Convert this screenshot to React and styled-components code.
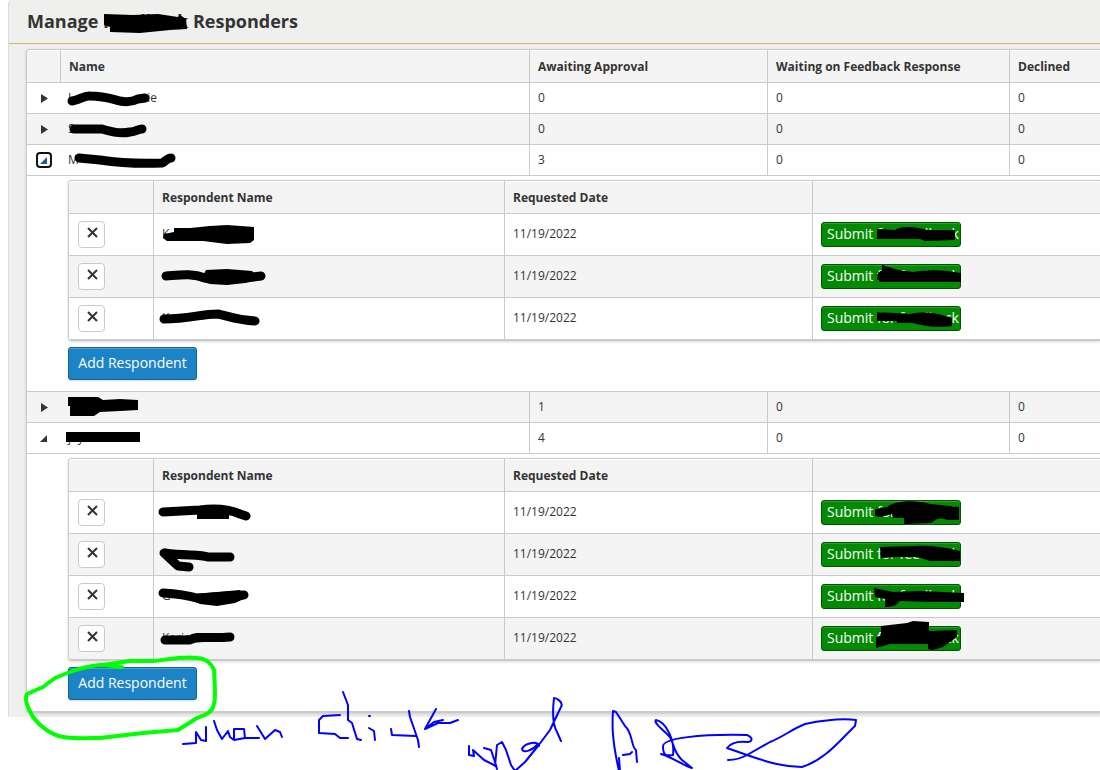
import React from 'react';
import styled, { createGlobalStyle } from 'styled-components';

const GlobalStyle = createGlobalStyle`
  * { box-sizing: border-box; }
  body {
    margin: 0;
    background: #fff;
    color: #333;
    font-family: "Open Sans", "Noto Sans", sans-serif;
    font-size: 12px;
    line-height: 16px;
  }
`;

const Page = styled.div`
  position: relative;
  min-height: 100vh;
  padding-left: 8px;
  overflow: hidden;
`;

const Panel = styled.main`
  border-left: 1px solid #dcdcdc;
  border-top-left-radius: 4px;
  background: #efefed;
  padding-bottom: 4px;
`;

const PanelHeader = styled.header`
  height: 44px;
  padding: 9px 18px;
  border-bottom: 1px solid #d5b95c;
`;

const Title = styled.h1`
  margin: 0;
  font-size: 18px;
  line-height: 24px;
  font-weight: 700;
`;

const PanelBody = styled.div`
  padding: 5px 0 0 17px;
`;

const Grid = styled.table`
  width: 100%;
  table-layout: fixed;
  border-collapse: separate;
  border-spacing: 0;
  border: solid #cacaca;
  border-width: 1px 0 1px 1px;
  border-radius: 4px 0 0 4px;
  background: #fff;
  box-shadow: 0 1px 3px rgba(0, 0, 0, 0.15);
`;

const Col = styled.col`
  width: ${(p) => p.$width || 'auto'};
`;

const HeadCell = styled.th`
  height: 33px;
  padding: 2px 8px 0;
  border-bottom: 1px solid #cacaca;
  background: #f4f4f4;
  box-shadow: inset 0 1px #fff;
  text-align: left;
  font-weight: 700;

  & + & { border-left: 1px solid #cacaca; }
  &:first-child { border-top-left-radius: 4px; }
`;

const Row = styled.tr`
  background: ${(p) => (p.$shaded ? '#f4f4f4' : '#fff')};
`;

const Cell = styled.td`
  height: ${(p) => (p.$tall ? '42px' : '31px')};
  padding: 0 8px;
  border-bottom: 1px solid #cacaca;
  border-left: ${(p) => (p.$divided ? '1px solid #cacaca' : '0')};
`;

const TextCell = styled(Cell)`
  padding-bottom: 2px;
`;

const ToggleCell = styled(Cell)`
  padding: 0 0 0 9px;
`;

const RemoveCell = styled(Cell)`
  padding: 0 9px;
`;

const DetailCell = styled.td`
  padding: 4px 0 11px 41px;
  border-bottom: 1px solid #cacaca;
`;

const PersonName = styled.span`
  display: flex;
  gap: ${(p) => p.$gap || 0}px;
`;

const Toggle = styled.button`
  display: flex;
  align-items: center;
  justify-content: center;
  width: 16px;
  height: 16px;
  padding: 0;
  border: 2px solid ${(p) => (p.$focused ? '#101010' : 'transparent')};
  border-radius: 4px;
  background: none;
  color: ${(p) => (p.$focused ? '#1f5a96' : '#333')};
`;

const RemoveButton = styled.button`
  display: flex;
  justify-content: center;
  width: 27px;
  height: 27px;
  padding: 5px 0 0 2px;
  border: 1px solid #cacaca;
  border-radius: 4px;
  background: #fff;
  color: #333;
`;

const SubmitButton = styled.button`
  display: block;
  height: 25px;
  width: 140px;
  padding: 0 5px 2px;
  border: 1px solid #045404;
  border-radius: 3px;
  background: #028a02;
  box-shadow: inset 0 1px #2fa02f;
  color: #fff;
  font: 14px/20px "Open Sans", "Noto Sans", sans-serif;
  text-align: left;
  white-space: nowrap;
`;

const AddButton = styled.button`
  display: block;
  width: 129px;
  height: 33px;
  margin-top: 6px;
  padding: 0 8px 2px;
  border: 1px solid #15618f;
  border-radius: 3px;
  background: #1c83c6;
  box-shadow: inset 0 1px #4a9fd4, 0 1px 2px rgba(0, 0, 0, 0.15);
  color: #fff;
  font: 14px/20px "Open Sans", "Noto Sans", sans-serif;
  white-space: nowrap;
`;

const Ink = styled.svg`
  position: absolute;
  top: 0;
  left: 0;
  pointer-events: none;
`;

function ToggleIcon({ open }) {
  return (
    <svg width="8" height="10" viewBox="0 0 8 10" fill="currentColor" aria-hidden="true">
      <path d={open ? 'M7 2v7H0z' : 'M1 1l7 4.5-7 4.5z'} />
    </svg>
  );
}

function CrossIcon() {
  return (
    <svg width="11" height="11" viewBox="0 0 11 11" fill="none" stroke="currentColor" strokeWidth="2" aria-hidden="true">
      <path d="M1 1l9 9M10 1L1 10" />
    </svg>
  );
}

const responders = [
  { id: 1, name: ['L', 'ie'], gap: 73, awaiting: 0 },
  { id: 2, name: ['S'], awaiting: 0 },
  { id: 3, name: ['M'], awaiting: 3, open: true, focused: true, people: ['K', '', 'K'] },
  { id: 4, name: [''], awaiting: 1 },
  { id: 5, name: ['jay'], awaiting: 4, open: true, people: ['', '', 'G', 'Karin'] },
];

function Respondents({ people }) {
  return (
    <>
      <Grid>
        <colgroup>
          <Col $width="84px" /><Col /><Col $width="308px" /><Col $width="288px" />
        </colgroup>
        <thead>
          <tr>
            <HeadCell aria-label="Remove" />
            <HeadCell>Respondent Name</HeadCell>
            <HeadCell>Requested Date</HeadCell>
            <HeadCell aria-label="Submit" />
          </tr>
        </thead>
        <tbody>
          {people.map((person, i) => (
            <Row key={i} $shaded={i % 2 === 1}>
              <RemoveCell $tall>
                <RemoveButton type="button" aria-label="Remove respondent"><CrossIcon /></RemoveButton>
              </RemoveCell>
              <TextCell $tall $divided>{person}</TextCell>
              <TextCell $tall $divided>11/19/2022</TextCell>
              <Cell $tall $divided>
                <SubmitButton type="button">Submit for feedback</SubmitButton>
              </Cell>
            </Row>
          ))}
        </tbody>
      </Grid>
      <AddButton type="button">Add Respondent</AddButton>
    </>
  );
}

function Responder({ item, shaded }) {
  return (
    <>
      <Row $shaded={shaded}>
        <ToggleCell>
          <Toggle type="button" $focused={item.focused} aria-expanded={!!item.open} aria-label="Show respondents">
            <ToggleIcon open={item.open} />
          </Toggle>
        </ToggleCell>
        <Cell>
          <PersonName $gap={item.gap}>
            {item.name.map((part) => <span key={part}>{part}</span>)}
          </PersonName>
        </Cell>
        <Cell $divided>{item.awaiting}</Cell>
        <Cell $divided>0</Cell>
        <Cell $divided>0</Cell>
      </Row>
      {item.open && (
        <tr>
          <DetailCell colSpan={5}><Respondents people={item.people} /></DetailCell>
        </tr>
      )}
    </>
  );
}

const blackShapes = [
  'M104 14L133 15 158 14 178 17 180 15 186 19 187 29 170 30 140 33 110 32 110 27 104 25Z',
  'M174 228L190 228 210 226 227 225 254 227 254 240 250 243 227 244 203 241 167 241 163 238 164 234 174 232Z',
  'M206 270L227 269 252 271 256 275 258 280 245 283 227 285 210 284 200 281Z',
  'M68 397H98L103 400 120 399 138 400V410L120 411 100 412 94 416H70V406H68Z',
  'M66 432h74v10H66z',
  'M197 510h32v9h-32z',
  'M197 594L217 592 240 590 246 598 235 603 217 606 200 604 190 600Z',
  'M877 229L895 230C900 226 914 226 927 230L955 230V240L925 241 920 239 893 239 877 239Z',
  'M882 265L898 270 913 272C930 269 945 270 961 273V282H880L877 279 878 273 882 270Z',
  'M877 312L895 313 910 314C925 311 938 313 952 318V326C940 328 927 327 913 323H897V321H877Z',
  'M875 509L887 507C893 501 914 499 930 504L959 507V520H947C937 516 936 521 930 523L904 524V518H893L892 514 880 517 875 516Z',
  'M880 547L913 546C930 545 945 547 960 551V561H930L917 557 897 557 881 558Z',
  'M874 588L893 592 920 591 964 593V602H930L900 601C897 603 898 607 885 607V599L875 597Z',
  'M881 626L907 623 913 621 929 622V631L957 630V637L943 647 933 650 928 649V644H890L876 648V638L881 635Z',
];

const blackStrokes = [
  'M72 101C80 100 84 95 90 96C104 96 112 99 120 101C130 103 136 100 138 99L145 98',
  'M74 129L102 129C112 132 120 134 130 132C135 132 138 129 142 129',
  'M79 158L100 160C120 163 140 164 162 163C165 162 167 158 171 158',
  'M166 276C180 275 192 273 205 278M245 278L261 276',
  'M164 319C190 319 200 314 218 314C228 316 236 320 255 321',
  'M163 512L200 510C215 508 228 509 240 514L246 516',
  'M164 553L178 566 189 567M165 553C185 556 200 554 208 557L230 557',
  'M163 593C180 594 190 596 197 598L244 595',
  'M165 640L190 640C198 635 205 639 230 637',
];

const bluePen = [
  'M183 744L196 743 196 732 201 740 206 741 206 727',
  'M214 721L217 730 222 739 228 731 230 737 234 740 245 738 244 729 234 729 234 739M245 738L259 738M257 726L265 739 275 730 280 732 282 737',
  'M340 715L323 716 319 720 319 733 335 734 340 738 348 738',
  'M343 692L348 705 348 720 352 723 357 739 361 740M369 716h1M369 728L374 731 375 740',
  'M391 729L392 735 416 736M409 711L410 717 418 740 419 747M436 709L425 729 434 722 443 720M425 729L438 723 450 723 458 720',
  'M469 746L469 755 474 756 473 750 484 760 494 765M484 748L491 750 495 762 497 769M495 766L497 745 502 742 506 750 511 765 515 771 525 762 538 746 550 730 561 707C564 702 556 698 554 698C552 715 554 727 557 732L561 741',
  'M539 746C540 741 525 742 522 749C523 754 533 750 538 744',
  'M619 771C612 740 612 725 613 711L616 712 625 726C633 733 631 747 636 750L637 762M623 755L630 754 632 752M619 758L620 771',
  'M656 720C653 722 663 730 668 735C674 740 672 751 682 760L692 768C684 766 672 757 661 754M656 720C666 722 675 740 673 755C666 756 663 756 663 746C664 738 700 734 747 735C754 738 752 742 747 742C737 741 730 744 727 748L747 755C770 763 785 767 802 767C825 760 840 740 855 726L856 720C840 718 820 721 805 724C790 730 785 736 770 742L747 755C740 759 735 760 728 760',
];

function Markup() {
  return (
    <Ink width="1100" height="770" viewBox="0 0 1100 770" fill="none" strokeLinecap="round" strokeLinejoin="round" aria-hidden="true">
      <g fill="#000">{blackShapes.map((d) => <path key={d} d={d} />)}</g>
      <g stroke="#000" strokeWidth="9">{blackStrokes.map((d) => <path key={d} d={d} />)}</g>
      <path
        stroke="#0f0"
        strokeWidth="4"
        d="M122 667C115 667 110 665 100 665C90 666 78 669 70 672L55 678 43 687 27 694C24 700 28 708 33 717C38 724 50 735 63 737C75 739 90 738 100 738L143 733 178 730 197 718C205 715 211 713 213 707C216 700 215 690 214 670C212 664 205 658 197 658C183 656 165 660 153 661L130 661 103 665"
      />
      <g stroke="#00f" strokeWidth="2">{bluePen.map((d) => <path key={d} d={d} />)}</g>
    </Ink>
  );
}

export default function App() {
  return (
    <Page>
      <GlobalStyle />
      <Panel>
        <PanelHeader>
          <Title>Manage Feedback Responders</Title>
        </PanelHeader>
        <PanelBody>
          <Grid>
            <colgroup>
              <Col $width="33px" /><Col /><Col $width="238px" /><Col $width="242px" /><Col $width="91px" />
            </colgroup>
            <thead>
              <tr>
                <HeadCell aria-label="Expand" />
                <HeadCell>Name</HeadCell>
                <HeadCell>Awaiting Approval</HeadCell>
                <HeadCell>Waiting on Feedback Response</HeadCell>
                <HeadCell>Declined</HeadCell>
              </tr>
            </thead>
            <tbody>
              {responders.map((item, i) => (
                <Responder key={item.id} item={item} shaded={i % 2 === 1} />
              ))}
            </tbody>
          </Grid>
        </PanelBody>
      </Panel>
      <Markup />
    </Page>
  );
}
